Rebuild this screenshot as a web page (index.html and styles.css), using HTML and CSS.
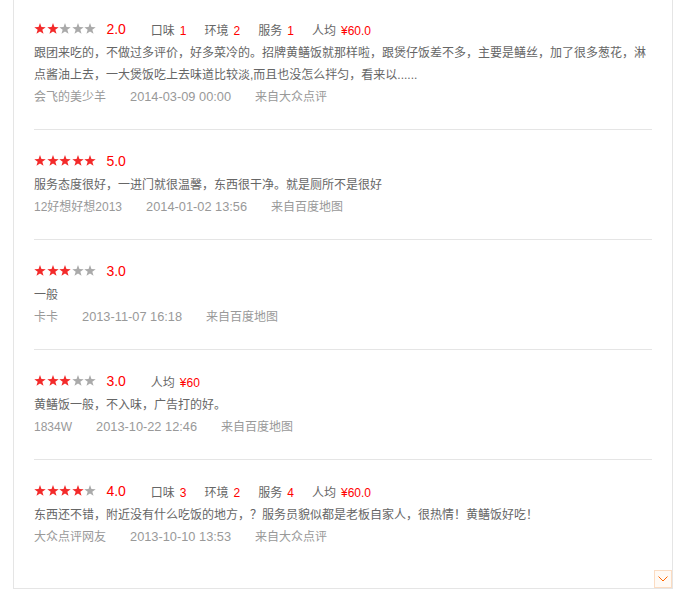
FILE: index.html
```html
<!DOCTYPE html>
<html>
<head>
    <meta charset="utf-8">
    <title>评论</title>
    <link rel="stylesheet" href="styles.css">
</head>
<body>
    <svg class="defs" width="0" height="0">
        <symbol id="star" viewBox="0 0 12 12">
            <polygon points="6,0 7.44,4.02 11.71,4.15 8.33,6.76 9.53,10.85 6,8.45 2.47,10.85 3.67,6.76 0.29,4.15 4.56,4.02"/>
        </symbol>
    </svg>

    <div class="comments">
        <div class="item">
            <div class="rating">
                <span class="stars">
                    <svg class="star on"><use href="#star"/></svg><svg class="star on"><use href="#star"/></svg><svg class="star"><use href="#star"/></svg><svg class="star"><use href="#star"/></svg><svg class="star"><use href="#star"/></svg>
                </span>
                <span class="score">2.0</span>
                <span class="sub">口味<em>1</em></span>
                <span class="sub">环境<em>2</em></span>
                <span class="sub">服务<em>1</em></span>
                <span class="sub">人均<em>¥60.0</em></span>
            </div>
            <p class="text">跟团来吃的，不做过多评价，好多菜冷的。招牌黄鳝饭就那样啦，跟煲仔饭差不多，主要是鳝丝，加了很多葱花，淋点酱油上去，一大煲饭吃上去味道比较淡,而且也没怎么拌匀，看来以......</p>
            <div class="meta">
                <span class="user">会飞的美少羊</span>
                <span class="time">2014-03-09 00:00</span>
                <span class="from">来自大众点评</span>
            </div>
        </div>

        <div class="item">
            <div class="rating">
                <span class="stars">
                    <svg class="star on"><use href="#star"/></svg><svg class="star on"><use href="#star"/></svg><svg class="star on"><use href="#star"/></svg><svg class="star on"><use href="#star"/></svg><svg class="star on"><use href="#star"/></svg>
                </span>
                <span class="score">5.0</span>
            </div>
            <p class="text">服务态度很好，一进门就很温馨，东西很干净。就是厕所不是很好</p>
            <div class="meta">
                <span class="user">12好想好想2013</span>
                <span class="time">2014-01-02 13:56</span>
                <span class="from">来自百度地图</span>
            </div>
        </div>

        <div class="item">
            <div class="rating">
                <span class="stars">
                    <svg class="star on"><use href="#star"/></svg><svg class="star on"><use href="#star"/></svg><svg class="star on"><use href="#star"/></svg><svg class="star"><use href="#star"/></svg><svg class="star"><use href="#star"/></svg>
                </span>
                <span class="score">3.0</span>
            </div>
            <p class="text">一般</p>
            <div class="meta">
                <span class="user">卡卡</span>
                <span class="time">2013-11-07 16:18</span>
                <span class="from">来自百度地图</span>
            </div>
        </div>

        <div class="item">
            <div class="rating">
                <span class="stars">
                    <svg class="star on"><use href="#star"/></svg><svg class="star on"><use href="#star"/></svg><svg class="star on"><use href="#star"/></svg><svg class="star"><use href="#star"/></svg><svg class="star"><use href="#star"/></svg>
                </span>
                <span class="score">3.0</span>
                <span class="sub">人均<em>¥60</em></span>
            </div>
            <p class="text">黄鳝饭一般，不入味，广告打的好。</p>
            <div class="meta">
                <span class="user">1834W</span>
                <span class="time">2013-10-22 12:46</span>
                <span class="from">来自百度地图</span>
            </div>
        </div>

        <div class="item">
            <div class="rating">
                <span class="stars">
                    <svg class="star on"><use href="#star"/></svg><svg class="star on"><use href="#star"/></svg><svg class="star on"><use href="#star"/></svg><svg class="star on"><use href="#star"/></svg><svg class="star"><use href="#star"/></svg>
                </span>
                <span class="score">4.0</span>
                <span class="sub">口味<em>3</em></span>
                <span class="sub">环境<em>2</em></span>
                <span class="sub">服务<em>4</em></span>
                <span class="sub">人均<em>¥60.0</em></span>
            </div>
            <p class="text">东西还不错，附近没有什么吃饭的地方，？服务员貌似都是老板自家人，很热情！黄鳝饭好吃！</p>
            <div class="meta">
                <span class="user">大众点评网友</span>
                <span class="time">2013-10-10 13:53</span>
                <span class="from">来自大众点评</span>
            </div>
        </div>

        <a class="more" href="#">
            <svg width="10" height="6" viewBox="0 0 10 6"><polyline points="0.5,0.5 5,5 9.5,0.5" fill="none" stroke="#f60" stroke-width="1"/></svg>
        </a>
    </div>
</body>
</html>
```

FILE: styles.css
```css
body {
    margin: 0;
    background: #fff;
    font-family: "Liberation Sans", "Noto Sans CJK SC", sans-serif;
    font-size: 12px;
    color: #666;
}
.defs {
    position: absolute;
}
.comments {
    position: relative;
    width: 618px;
    margin-left: 13px;
    padding: 0 20px 19px;
    border: 1px solid #e5e5e5;
    border-top: none;
}
.item {
    padding: 20px 0 21px;
    border-bottom: 1px solid #e5e5e5;
}
.item:first-child {
    padding-top: 18px;
}
.item:last-of-type {
    border-bottom: none;
}
.rating {
    display: flex;
    align-items: center;
    height: 22px;
}
.stars {
    display: flex;
    gap: 0.6px;
}
.star {
    width: 12px;
    height: 12px;
    fill: #aaa;
}
.star.on {
    fill: #f32a2a;
}
.score {
    margin: 0 25px 0 10px;
    font-size: 14px;
    color: #f00;
}
.sub {
    margin-right: 18px;
    color: #666;
}
.sub em {
    font-style: normal;
    color: #f00;
    margin-left: 5px;
}
.text {
    margin: 2px 0 0;
    line-height: 22px;
    color: #666;
}
.meta {
    display: flex;
    gap: 24px;
    line-height: 22px;
    color: #999;
}
.time {
    font-size: 12.8px;
}
.more {
    position: absolute;
    right: 0;
    bottom: 0;
    width: 16px;
    height: 16px;
    border: 1px solid #fbdcc2;
    background: #fffaf5;
    display: flex;
    align-items: center;
    justify-content: center;
}
```
